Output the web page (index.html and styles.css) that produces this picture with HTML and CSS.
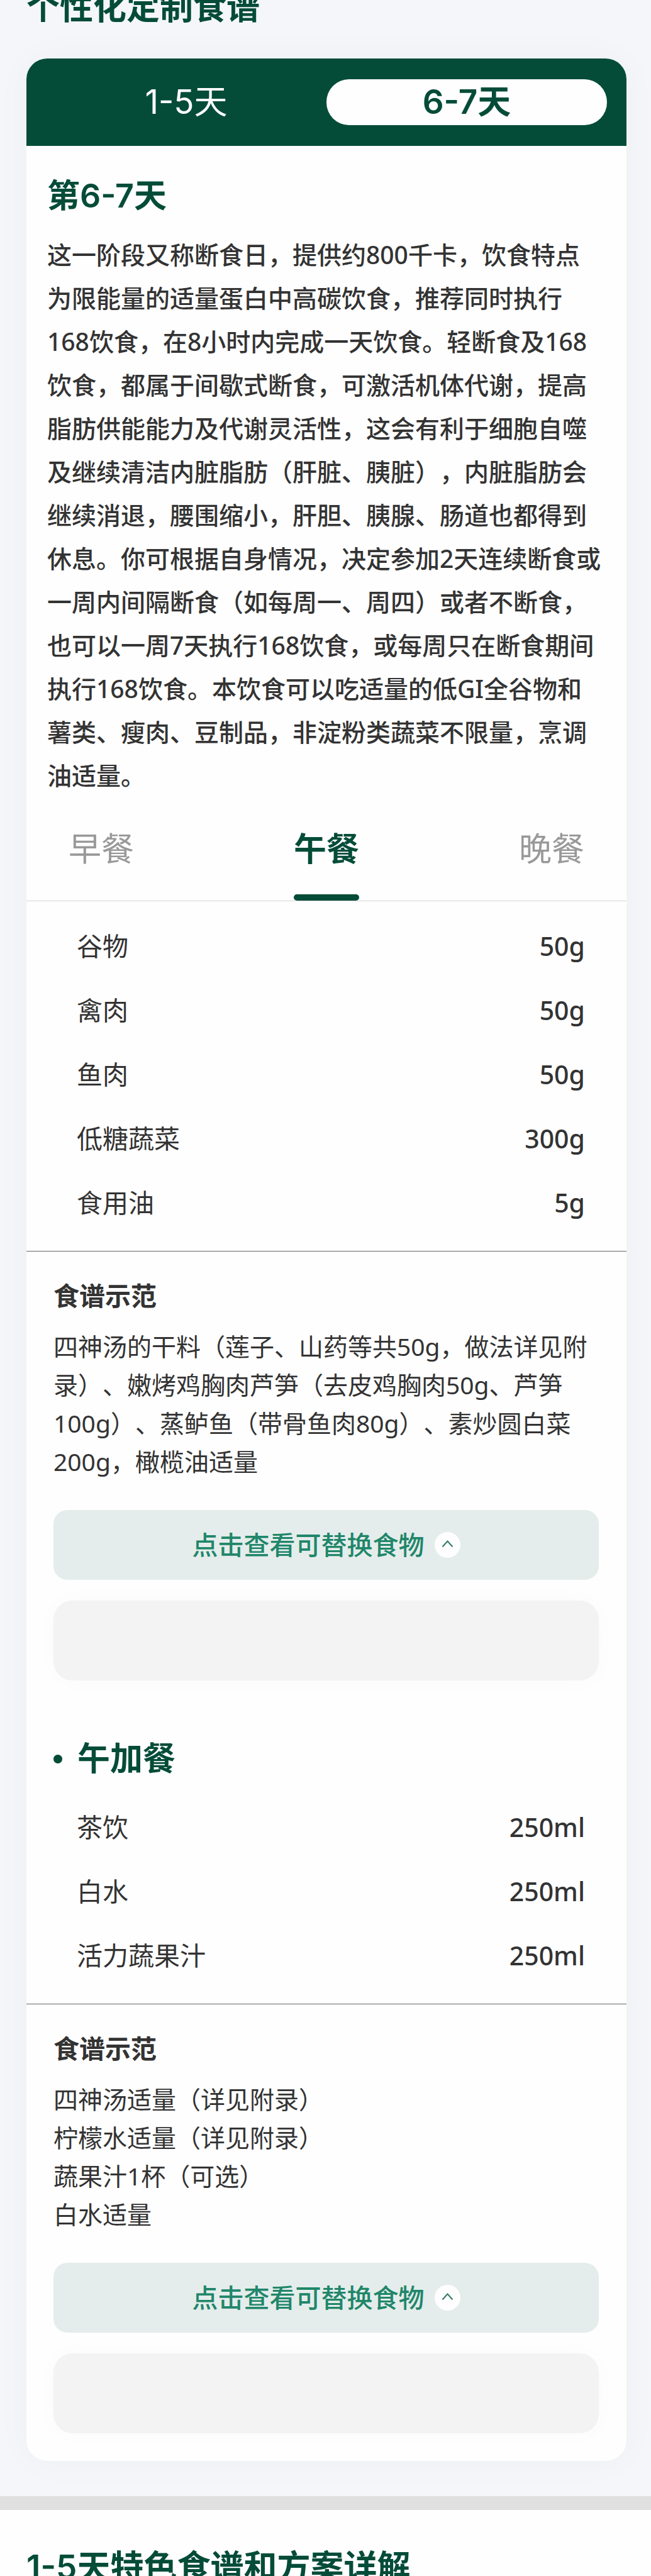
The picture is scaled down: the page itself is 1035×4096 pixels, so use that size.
FILE: index.html
```html
<!DOCTYPE html>
<html lang="zh-CN">
<head>
<meta charset="utf-8">
<meta name="viewport" content="width=device-width, initial-scale=1">
<title>个性化定制食谱</title>
<link rel="stylesheet" href="styles.css">
</head>
<body>
<main class="plan">
  <h1 class="plan-title">个性化定制食谱</h1>
  <article class="card">
    <div class="day-tabs" role="tablist">
      <button type="button" class="day-tab" role="tab" aria-selected="false">1-5天</button>
      <button type="button" class="day-tab day-tab-active" role="tab" aria-selected="true">6-7天</button>
    </div>

    <section class="intro">
      <h2 class="heading">第6-7天</h2>
      <p class="intro-text">这一阶段又称断食日，提供约800千卡，饮食特点为限能量的适量蛋白中高碳饮食，推荐同时执行168饮食，在8小时内完成一天饮食。轻断食及168饮食，都属于间歇式断食，可激活机体代谢，提高脂肪供能能力及代谢灵活性，这会有利于细胞自噬及继续清洁内脏脂肪（肝脏、胰脏），内脏脂肪会继续消退，腰围缩小，肝胆、胰腺、肠道也都得到休息。你可根据自身情况，决定参加2天连续断食或一周内间隔断食（如每周一、周四）或者不断食，也可以一周7天执行168饮食，或每周只在断食期间执行168饮食。本饮食可以吃适量的低GI全谷物和薯类、瘦肉、豆制品，非淀粉类蔬菜不限量，烹调油适量。</p>
    </section>

    <div class="meal-tabs" role="tablist">
      <button type="button" class="meal-tab" role="tab" aria-selected="false">早餐</button>
      <button type="button" class="meal-tab meal-tab-active" role="tab" aria-selected="true">午餐</button>
      <button type="button" class="meal-tab" role="tab" aria-selected="false">晚餐</button>
    </div>

    <div class="foods">
      <table class="food-table">
        <tbody>
          <tr><th scope="row">谷物</th><td>50g</td></tr>
          <tr><th scope="row">禽肉</th><td>50g</td></tr>
          <tr><th scope="row">鱼肉</th><td>50g</td></tr>
          <tr><th scope="row">低糖蔬菜</th><td>300g</td></tr>
          <tr><th scope="row">食用油</th><td>5g</td></tr>
        </tbody>
      </table>
    </div>

    <section class="sample">
      <h3 class="sample-title">食谱示范</h3>
      <p class="sample-text">四神汤的干料（莲子、山药等共50g，做法详见附录）、嫩烤鸡胸肉芦笋（去皮鸡胸肉50g、芦笋100g）、蒸鲈鱼（带骨鱼肉80g）、素炒圆白菜200g，橄榄油适量</p>
      <button type="button" class="swap-button">
        <span>点击查看可替换食物</span>
        <svg class="swap-icon" viewBox="0 0 41 41" aria-hidden="true"><circle cx="20.5" cy="20.5" r="20.5"/><path d="M12.5 23.5 20.5 14.5 28.5 23.5"/></svg>
      </button>
      <div class="swap-panel"></div>
    </section>

    <h2 class="heading snack-heading">午加餐</h2>
    <div class="foods">
      <table class="food-table">
        <tbody>
          <tr><th scope="row">茶饮</th><td>250ml</td></tr>
          <tr><th scope="row">白水</th><td>250ml</td></tr>
          <tr><th scope="row">活力蔬果汁</th><td>250ml</td></tr>
        </tbody>
      </table>
    </div>

    <section class="sample sample-last">
      <h3 class="sample-title">食谱示范</h3>
      <p class="sample-text">四神汤适量（详见附录）<br>柠檬水适量（详见附录）<br>蔬果汁1杯（可选）<br>白水适量</p>
      <button type="button" class="swap-button">
        <span>点击查看可替换食物</span>
        <svg class="swap-icon" viewBox="0 0 41 41" aria-hidden="true"><circle cx="20.5" cy="20.5" r="20.5"/><path d="M12.5 23.5 20.5 14.5 28.5 23.5"/></svg>
      </button>
      <div class="swap-panel"></div>
    </section>
  </article>
</main>
<section class="details">
  <h2 class="details-title">1-5天特色食谱和方案详解</h2>
</section>
</body>
</html>
```
FILE: styles.css
```css
:root {
  --green: #044c38;
  --ink: #333;
  --text: "Noto Sans", "Noto Sans CJK SC", sans-serif;
  --display: Inter, "Noto Sans CJK SC", sans-serif;
}

* {
  box-sizing: border-box;
}

body {
  margin: 0;
  background: #fefefe;
  color: var(--ink);
  font-family: var(--text);
  font-size: 39px;
  text-spacing-trim: space-all;
}

h1, h2, h3, p {
  margin: 0;
}

button {
  border: 0;
  padding: 0;
  background: none;
  color: inherit;
  font: inherit;
  cursor: pointer;
}

.plan {
  padding: 0 39px 56px 42px;
  background: #f4f6fa;
  border-bottom: 22px solid #e0e0e0;
  overflow: hidden;
}

.plan-title {
  margin-bottom: 69px;
  color: var(--green);
  font-family: var(--display);
  font-size: 53px;
  font-weight: 600;
  line-height: 24px;
}

.card {
  border-radius: 33px;
  background: #fefefe;
  box-shadow: 0 0 60px rgba(0, 0, 0, 0.03);
}

/* Day switch */
.day-tabs {
  display: grid;
  grid-template-columns: 1fr 1fr;
  padding: 33px 31px;
  border-radius: 33px 33px 0 0;
  background: var(--green);
}

.day-tab {
  height: 73px;
  border-radius: 36px;
  color: #fefefe;
  font-family: var(--display);
  font-size: 53px;
  font-weight: 400;
  line-height: 73px;
}

.day-tab-active {
  background: #fefefe;
  color: var(--green);
  font-weight: 600;
}

/* Introduction */
.intro {
  padding: 41px 39px 0 33px;
}

.heading {
  color: var(--green);
  font-family: var(--display);
  font-size: 52px;
  font-weight: 600;
  line-height: 78px;
}

.intro-text {
  margin-top: 19px;
  font-weight: 500;
  line-height: 69px;
}

/* Meal switch */
.meal-tabs {
  display: flex;
  justify-content: space-between;
  padding: 43px 67px 0;
  border-bottom: 1px solid #d5d5d5;
}

.meal-tab {
  color: #999;
  font-size: 52px;
  line-height: 78px;
}

.meal-tab::after {
  content: "";
  display: block;
  height: 10px;
  margin-top: 34px;
  border-radius: 5px;
}

.meal-tab-active {
  color: var(--green);
  font-weight: 600;
}

.meal-tab-active::after {
  background: var(--green);
}

/* Food amounts */
.foods {
  padding: 20px 66px 26px 80px;
  border-bottom: 1px solid #666;
}

.food-table {
  width: 100%;
  border-collapse: collapse;
  font-size: 41px;
  line-height: 102px;
}

.food-table th {
  padding: 0;
  font-weight: 400;
  text-align: left;
}

.food-table td {
  padding: 0;
  font-weight: 500;
  text-align: right;
}

/* Sample menu */
.sample {
  padding: 40px 44px 88px 43px;
}

.sample-last {
  padding-bottom: 44px;
}

.sample-title {
  margin-bottom: 19px;
  font-size: 41px;
  font-weight: 600;
  line-height: 61px;
}

.sample-text {
  line-height: 61px;
}

.swap-button {
  display: flex;
  align-items: center;
  justify-content: center;
  gap: 16px;
  width: 100%;
  height: 111px;
  margin: 47px 0 33px;
  border-radius: 22px;
  background: #e4edeb;
  color: #21866a;
  font-size: 41px;
  font-weight: 500;
  line-height: 61px;
}

.swap-icon {
  width: 41px;
  height: 41px;
  fill: #fefefe;
}

.swap-icon path {
  fill: none;
  stroke: #2f7a66;
  stroke-width: 2;
}

.swap-panel {
  height: 127px;
  border-radius: 30px;
  background: #f3f3f3;
  box-shadow: 0 0 40px rgba(0, 0, 0, 0.02);
}

.snack-heading {
  display: flex;
  align-items: center;
  gap: 24px;
  padding-left: 43px;
  line-height: 74px;
}

.snack-heading::before {
  content: "";
  width: 14px;
  height: 14px;
  border-radius: 50%;
  background: var(--green);
}

/* Next section */
.details {
  padding: 77px 42px 0;
  overflow: hidden;
}

.details-title {
  color: var(--green);
  font-family: var(--display);
  font-size: 53px;
  font-weight: 600;
  line-height: 28px;
}
```
